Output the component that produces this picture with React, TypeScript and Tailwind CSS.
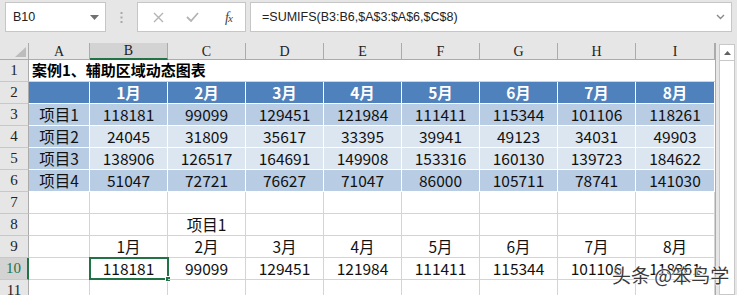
import React from "react";

const cols = ["A", "B", "C", "D", "E", "F", "G", "H", "I"];
const months = ["1月", "2月", "3月", "4月", "5月", "6月", "7月", "8月"];
const data: [string, number[]][] = [
  ["项目1", [118181, 99099, 129451, 121984, 111411, 115344, 101106, 118261]],
  ["项目2", [24045, 31809, 35617, 33395, 39941, 49123, 34031, 49903]],
  ["项目3", [138906, 126517, 164691, 149908, 153316, 160130, 139723, 184622]],
  ["项目4", [51047, 72721, 76627, 71047, 86000, 105711, 78741, 141030]],
];

const grid =
  "grid grid-cols-[29px_61px_78px_78px_78px_78px_78px_78px_78px_79px]";
const cjk = "font-['Microsoft_YaHei','Noto_Sans_CJK_SC',sans-serif]";
const serif = "font-['SimSun','Liberation_Serif',serif]";

function RowHead({ n, active }: { n: number; active?: boolean }) {
  return (
    <div
      className={`h-[22px] flex items-center justify-center border-b border-[#c8c8c8] ${serif} text-[15px] ${
        active
          ? "bg-[#d3d3d3] text-[#217346] border-r-2 border-r-[#217346]"
          : "bg-[#e6e6e6] text-[#222] border-r border-r-[#ababab]"
      }`}
    >
      {n}
    </div>
  );
}

function Cell({
  children,
  cls = "",
}: {
  children?: React.ReactNode;
  cls?: string;
}) {
  return (
    <div
      className={`h-[22px] flex items-center justify-center border-r border-b ${cjk} text-[15.5px] text-[#111] whitespace-nowrap ${cls}`}
    >
      {children}
    </div>
  );
}

export default function App() {
  return (
    <div className="w-[737px] h-[295px] bg-[#e6e6e6] overflow-hidden relative select-none">
      {/* formula bar */}
      <div className="h-[43px] flex items-start pt-[2px] bg-[#e6e6e6]">
        <div className="ml-[5px] w-[101px] h-[30px] bg-white border border-[#c6c6c6] flex items-center justify-between pl-[7px] pr-[6px]">
          <span className="font-['Segoe_UI','Liberation_Sans',sans-serif] text-[12.5px] text-[#222]">
            B10
          </span>
          <svg width="9" height="5" viewBox="0 0 9 5">
            <path d="M0 0 L9 0 L4.5 5 Z" fill="#707070" />
          </svg>
        </div>
        <div className="w-[31px] h-[30px] flex items-center justify-center">
          <svg width="3" height="11" viewBox="0 0 3 11">
            <rect x="0.5" y="0" width="2" height="2" fill="#a8a8a8" />
            <rect x="0.5" y="4.5" width="2" height="2" fill="#a8a8a8" />
            <rect x="0.5" y="9" width="2" height="2" fill="#a8a8a8" />
          </svg>
        </div>
        <div className="w-[109px] h-[30px] bg-white border border-[#c6c6c6] flex items-center">
          <svg className="ml-[15px]" width="11" height="11" viewBox="0 0 11 11">
            <path d="M1 1 L10 10 M10 1 L1 10" stroke="#b4b4b4" strokeWidth="1.4" />
          </svg>
          <svg className="ml-[22px]" width="13" height="10" viewBox="0 0 13 10">
            <path d="M1 5 L5 9 L12 1" stroke="#b4b4b4" strokeWidth="1.8" fill="none" />
          </svg>
          <span className="ml-[26px] font-['Liberation_Serif',serif] italic text-[14px] text-[#444] tracking-[-1px]">
            f<span className="text-[11px]">x</span>
          </span>
        </div>
        <div className="ml-[4px] w-[482px] h-[30px] bg-white border border-[#c6c6c6] flex items-center justify-between pl-[11px] pr-[6px]">
          <span className="font-['Segoe_UI','Liberation_Sans',sans-serif] text-[12.5px] text-[#222]">
            =SUMIFS(B3:B6,$A$3:$A$6,$C$8)
          </span>
          <svg width="9" height="6" viewBox="0 0 9 6">
            <path d="M1 1 L4.5 4.5 L8 1" stroke="#8a8a8a" strokeWidth="1.4" fill="none" />
          </svg>
        </div>
      </div>

      <div className="flex">
        {/* sheet */}
        <div className="w-[715px] bg-white">
          <div className={grid}>
            {/* column header */}
            <div className="h-[17px] bg-[#e6e6e6] border-r border-b border-[#ababab] relative">
              <svg className="absolute left-[15px] top-[4px]" width="11" height="10" viewBox="0 0 11 10">
                <path d="M11 0 L11 10 L0 10 Z" fill="#bcbcbc" />
              </svg>
            </div>
            {cols.map((c) => (
              <div
                key={c}
                className={`h-[17px] flex items-center justify-center ${serif} text-[14px] border-r border-r-[#ababab] ${
                  c === "B"
                    ? "bg-[#d3d3d3] border-b-2 border-b-[#217346] text-[#222]"
                    : "bg-[#e6e6e6] border-b border-b-[#ababab] text-[#222]"
                }`}
              >
                {c}
              </div>
            ))}

            {/* row 1 */}
            <RowHead n={1} />
            <div className="col-span-9 h-[22px] flex items-center pl-[3px] border-b border-[#d4d4d4] font-['Microsoft_YaHei','Noto_Sans_CJK_SC',sans-serif] font-bold text-[15px] text-black">
              案例1、辅助区域动态图表
            </div>

            {/* row 2 */}
            <RowHead n={2} />
            <Cell cls="bg-[#4f81bd] border-white" />
            {months.map((m) => (
              <Cell key={m} cls="bg-[#4f81bd] border-white text-white font-bold">
                {m}
              </Cell>
            ))}

            {/* rows 3-6 */}
            {data.map(([name, vals], i) => {
              const dark = i === 0 || i === 3;
              const band = dark ? "bg-[#b8cce4]" : "bg-[#dce6f1]";
              return (
                <React.Fragment key={name}>
                  <RowHead n={i + 3} />
                  <Cell cls="bg-[#b8cce4] border-white">{name}</Cell>
                  {vals.map((v, j) => (
                    <Cell key={j} cls={`${band} border-white`}>
                      {v}
                    </Cell>
                  ))}
                </React.Fragment>
              );
            })}

            {/* row 7 */}
            <RowHead n={7} />
            {cols.map((c) => (
              <Cell key={c} cls="border-[#d4d4d4]" />
            ))}

            {/* row 8 */}
            <RowHead n={8} />
            {cols.map((c) => (
              <Cell key={c} cls="border-[#d4d4d4]">
                {c === "C" ? "项目1" : null}
              </Cell>
            ))}

            {/* row 9 */}
            <RowHead n={9} />
            <Cell cls="border-[#d4d4d4]" />
            {months.map((m) => (
              <Cell key={m} cls="border-[#d4d4d4]">
                {m}
              </Cell>
            ))}

            {/* row 10 */}
            <RowHead n={10} active />
            <Cell cls="border-[#d4d4d4]" />
            {data[0][1].map((v, j) => (
              <Cell key={j} cls="border-[#d4d4d4] relative">
                {v}
                {j === 0 && (
                  <>
                    <div className="absolute left-[-1px] top-[-1px] right-[-2px] bottom-[-1px] border-2 border-[#217346]" />
                    <div className="absolute right-[-4px] bottom-[-3px] w-[6px] h-[6px] bg-[#217346] border border-white" />
                  </>
                )}
              </Cell>
            ))}

            {/* row 11 */}
            <RowHead n={11} />
            {cols.map((c) => (
              <Cell key={c} cls="border-[#d4d4d4]" />
            ))}
          </div>
        </div>

        {/* scroll bar */}
        <div className="w-[22px] h-[252px] border-l border-[#ababab] bg-[#e6e6e6] pl-[3px] pt-[1px]">
          <div className="w-[16px] h-[251px] bg-white border border-[#c8c8c8]">
            <div className="h-[16px] border-b border-[#c8c8c8] flex items-center justify-center">
              <svg width="7" height="4" viewBox="0 0 7 4">
                <path d="M0 4 L3.5 0 L7 4 Z" fill="#606060" />
              </svg>
            </div>
          </div>
        </div>
      </div>

      {/* watermark */}
      <div className="absolute left-[612px] top-[265px] font-['Noto_Sans_CJK_SC',sans-serif] text-[19px] leading-none text-[#3a3a3a] [text-shadow:0_0_2px_#fff,0_0_2px_#fff,0_0_1px_#fff] whitespace-nowrap">
        头条 @笨鸟学
      </div>
    </div>
  );
}
